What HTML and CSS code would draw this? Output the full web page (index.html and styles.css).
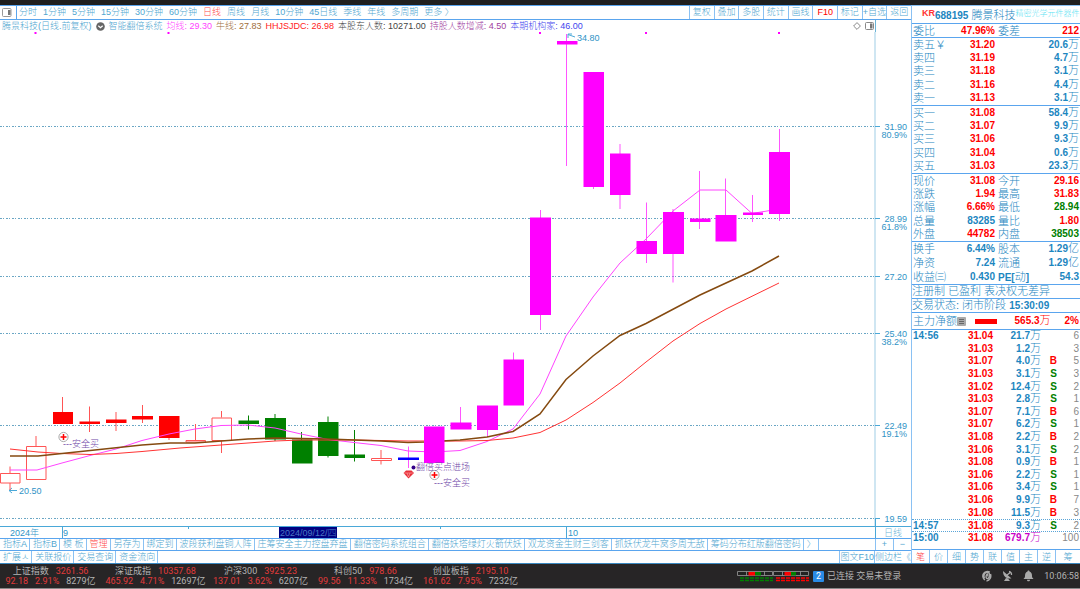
FILE: index.html
```html
<!DOCTYPE html>
<html lang="zh-CN">
<head>
<meta charset="utf-8">
<title>腾景科技 688195</title>
<link rel="stylesheet" href="styles.css">
</head>
<body>
<div class="titlebar"></div>
<div class="workspace">
<main class="left">
  <nav class="toolbar">
    <button class="pane-toggle" aria-label="侧栏"><svg width="10" height="9" viewBox="0 0 10 9"><rect x=".5" y=".5" width="8.500" height="8" rx="1" fill="#fff" stroke="#999"/><rect x="6" y="2" width="2.500" height="5" fill="#777"/></svg></button>
    <div class="periods">
      <button>分时</button><button>1分钟</button><button>5分钟</button><button>15分钟</button><button>30分钟</button><button>60分钟</button><button class="on">日线</button><button>周线</button><button>月线</button><button>10分钟</button><button>45日线</button><button>季线</button><button>年线</button><button>多周期</button><button>更多 〉</button>
    </div>
    <div class="actions">
      <button>复权</button><button>叠加</button><button>多股</button><button>统计</button><button>画线</button><button class="f10">F10</button><button>标记</button><button>+自选</button><button>返回</button>
    </div>
  </nav>
  <div class="indicators">
    <span>腾景科技(日线.前复权)</span>
    <svg width="9" height="9" viewBox="0 0 9 9"><circle cx="4.500" cy="4.500" r="4.300" fill="#666"/><path d="M2.300 3.700 4.500 5.700 6.700 3.700" fill="none" stroke="#fff" stroke-width="1.200"/></svg>
    <span>智能翻倍系统</span>
    <span class="magenta">均线: 29.30</span>
    <span class="brown">牛线: 27.83</span>
    <span class="red">HHJSJDC: 26.98</span>
    <span class="dark">本股东人数: 10271.00</span>
    <span class="purple">持股人数增减: 4.50</span>
    <span class="blue">本期机构家: 46.00</span>
    <div class="corner">
      <svg width="8" height="8" viewBox="0 0 8 8"><path d="M4 .6 7.400 4 4 7.400 .6 4Z" fill="none" stroke="#888"/></svg>
      <svg width="9" height="8" viewBox="0 0 9 8"><rect x=".5" y=".5" width="8" height="7" rx="1" fill="none" stroke="#888"/><rect x="5" y="1.500" width="2.500" height="5" fill="#777"/></svg>
    </div>
  </div>
  <svg class="chart" viewBox="0 32 911 506" role="img" aria-label="日线图">
    <g class="grid">
      <path d="M0 126.500H875M0 218.500H875M0 276.500H875M0 333.500H875M0 425.500H875M0 518.500H875"/>
    </g>
    <path class="axis-soft" d="M875 32V526"/>
    <path class="axis" d="M875 126.500h5M875 218.500h5M875 276.500h5M875 333.500h5M875 425.500h5M875 518.500h5M875.500 519V538M0 526.500H911M62.500 527V538M566.500 527V538M188.500 527v2M440.500 527v2"/>
    <g class="price" text-anchor="end">
      <text x="907" y="130">31.90</text><text x="907" y="138">80.9%</text>
      <text x="907" y="222">28.99</text><text x="907" y="230">61.8%</text>
      <text x="907" y="280">27.20</text>
      <text x="907" y="337">25.40</text><text x="907" y="345">38.2%</text>
      <text x="907" y="429">22.49</text><text x="907" y="437">19.1%</text>
      <text x="907" y="522">19.59</text>
    </g>
    <rect x="279" y="527" width="58" height="11" fill="#000080"/>
    <g class="price">
      <text x="10" y="536">2024年</text><text x="63" y="536">9</text><text x="280" y="536" class="hl">2024/09/12/四</text><text x="568" y="536">10</text><text x="884" y="536" class="pale">日线</text>
      <text x="19" y="494">20.50</text><text x="577" y="41">34.80</text>
    </g>
    <path class="axis" d="M9 490.500h8M12 488 9 490.500 12 493M568 34.500 575 37M568 38v-4h4"/>

    <g class="m-wick">
      <path d="M408.500 446.500V468M460.500 407v16M487.500 430v7M513.500 352.500v8M540.500 210v120M566.500 34v132M593.500 187v2M620 144v65M646.500 202.500V263M673 209v73.500M699.500 171v58M725.500 178.500V216M752.500 195v27M779.500 129v92"/>
    </g>
    <g class="r-wick">
      <path d="M10 466.500V473M10 483v7M36 436v10.500M62.500 397v27M89.500 406.500V432M116 412v19M142.500 405v18M169 438v2M195.500 424v16M221.500 411v6.500M221.500 440.500V453M381 450v14.500"/>
      <path d="M.5 473.500h19.500v9.500H.5ZM26.500 446.500h19.500v33H26.500ZM186 440.500h19.500v1.500H186ZM212 418h19.500v22.500H212ZM371.500 458.500h20v2h-20Z"/>
    </g>
    <path class="g-wick" d="M248.500 415.500v14M275 414v27M301.500 432v8M328 416.500V457.500M354.500 430v31.500"/>
    <path fill="#f00" d="M53 412h20v12H53ZM79.500 421.500H100v2.500H79.500ZM106 419.500h20.500v3.500H106ZM132 416h21v3.500h-21ZM159 416h20.500v22H159Z"/>
    <path fill="#008000" d="M238.500 420.500H259v3.500h-20.500ZM265 418h21v21.500h-21ZM292 439.500h20.500v24H292ZM318 422h20.500v34H318ZM344.500 454.500H365v3.500h-20.500Z"/>
    <path class="m-line" d="M10 470H37L62 463 90 455.500 116 449 142 440.500 169 434 195 429 221 425.500 248 425 275 428 301 434 328 439.500 354 442.500 381 445.500 408 451 434 452 460 450.500 487 441.500 513 429 540 394 566 336 593 297 620 263 646 239 673 211 700 190H726L752 213.500 779 209"/>
    <path class="r-line" d="M10 449 38 452 62 453.500 90 454.500 116 453.500 142 451.500 180 448 221 445 275 441 301 440H354L408 441H460L487 440.500 513 438 540 432.500 566 420 593 402.500 620 383 646 362 673 341 700 323.500 726 309 779 283"/>
    <path class="b-line" d="M10 456H38L62 453.500 142 445 170 443H195L248 439 275 438 328 439 381 441 408 442.500 424 442 460 440 487 437 513 431.500 540 414 566 379.500 593 356 620 335.500 646 323.500 700 295 752 271 779 256"/>
    <path fill="#00f" d="M398 457.500h21v2.500h-21Z"/>
    <path fill="#f0f" d="M424 426.500h20.500v36.500H424ZM450.500 422.500h21v7h-21ZM477 405.500h21V430h-21ZM503.500 359.500H524v46h-20.500ZM530 217.500h21V315h-21ZM557 41h20.500v3.500H557ZM583.500 72H604v115h-20.500ZM610 153.500h20.500V195H610ZM636.500 241H657v13h-20.500ZM663 212h21v42h-21ZM690 218.500h20.500v3.500H690ZM715.500 215h21v26.500h-21ZM743 212.500h20v2.500h-20ZM769 152h21v62h-21Z"/>
    <path fill="#f0f" d="M34.500 32h2v2h-2ZM167.500 32h2v2h-2ZM539 32h2v2h-2ZM645 32h2v2h-2ZM778 32h2v2h-2Z"/>
    <g class="signal">
      <circle cx="63.500" cy="437" r="4.600"/><path d="M60.500 437h6M63.500 434v6"/>
      <circle cx="434.500" cy="475" r="4.600"/><path d="M431.500 475h6M434.500 472v6"/>
    </g>
    <path d="M406 470.500h5.500L414 473l-5.500 5.500L403.500 473Z" fill="#e8303a"/><path d="M404 473h9M407 473l1.500 4 1.500-4" fill="none" stroke="#ffb0b0" stroke-width=".6"/>
    <circle cx="413.500" cy="467.500" r="2" fill="#308"/>
    <g class="note"><text x="63" y="447">---安全买</text><text x="416" y="470">翻倍买点进场</text><text x="434" y="486">---安全买</text></g>
  </svg>
  <nav class="tabs">
    <button>指标A</button><button>指标B</button><button>模 板</button><button class="on">管理</button><button>另存为</button><button>绑定到</button><button>波段获利盘铜人阵</button><button>庄筹安全主力控盘弃盘</button><button>翻倍密码系统组合</button><button>翻倍妖塔绿灯火箭伏妖</button><button>双龙资金生财三剑客</button><button>抓妖伏龙牛窝多周无敌</button><button>筹码分布红版翻倍密码</button><button>〉</button>
    <div class="zoom"><button>+</button><button>−</button></div>
  </nav>
  <nav class="tabs second">
    <button>扩展ㅅ</button><button>关联报价</button><button>交易查询</button><button>资金流向</button>
    <div class="side"><button>图文F10</button><button>侧边栏</button><button class="more">《</button></div>
  </nav>
</main>

<aside class="quote">
  <h1><sup>KR</sup><b>688195</b> 腾景科技<small>精密光学元件器件</small></h1>
  <table class="pair one"><tbody>
    <tr><th>委比</th><td class="up">47.96%</td><th>委差</th><td class="up">212</td></tr>
  </tbody></table>
  <table class="book"><tbody>
    <tr><th>卖五￥</th><td class="up">31.20</td><td>20.6<i>万</i></td></tr>
    <tr><th>卖四</th><td class="up">31.19</td><td>4.7<i>万</i></td></tr>
    <tr><th>卖三</th><td class="up">31.18</td><td>3.1<i>万</i></td></tr>
    <tr><th>卖二</th><td class="up">31.16</td><td>4.4<i>万</i></td></tr>
    <tr><th>卖一</th><td class="up">31.13</td><td>3.1<i>万</i></td></tr>
  </tbody></table>
  <table class="book"><tbody>
    <tr><th>买一</th><td class="up">31.08</td><td>58.4<i>万</i></td></tr>
    <tr><th>买二</th><td class="up">31.07</td><td>9.9<i>万</i></td></tr>
    <tr><th>买三</th><td class="up">31.06</td><td>9.3<i>万</i></td></tr>
    <tr><th>买四</th><td class="up">31.04</td><td>0.6<i>万</i></td></tr>
    <tr><th>买五</th><td class="up">31.03</td><td>23.3<i>万</i></td></tr>
  </tbody></table>
  <table class="pair five"><tbody>
    <tr><th>现价</th><td class="up">31.08</td><th>今开</th><td class="up">29.16</td></tr>
    <tr><th>涨跌</th><td class="up">1.94</td><th>最高</th><td class="up">31.83</td></tr>
    <tr><th>涨幅</th><td class="up">6.66%</td><th>最低</th><td class="down">28.94</td></tr>
    <tr><th>总量</th><td>83285</td><th>量比</th><td class="up">1.80</td></tr>
    <tr><th>外盘</th><td class="up">44782</td><th>内盘</th><td class="down">38503</td></tr>
  </tbody></table>
  <table class="pair three"><tbody>
    <tr><th>换手</th><td>6.44%</td><th>股本</th><td>1.29<i>亿</i></td></tr>
    <tr><th>净资</th><td>7.24</td><th>流通</th><td>1.29<i>亿</i></td></tr>
    <tr><th>收益㈢</th><td>0.430</td><th><b>PE[</b>动<b>]</b></th><td>54.3</td></tr>
  </tbody></table>
  <p>注册制 已盈利 表决权无差异</p>
  <p>交易状态: 闭市阶段 <b>15:30:09</b></p>
  <div class="flow"><span>主力净额</span><svg width="9" height="9" viewBox="0 0 9 9"><rect width="9" height="9" rx="1" fill="#aaa"/><path d="M2 2.500h5M2 4.500h5M2 6.500h5" stroke="#555" stroke-width=".8"/></svg><span class="bar"></span><b>565.3<i>万</i></b><b class="pct">2%</b></div>
  <table class="ticks"><tbody>
    <tr><th>14:56</th><td class="up">31.04</td><td>21.7<i>万</i></td><td></td><td>6</td></tr>
    <tr><th></th><td class="up">31.03</td><td>1.2<i>万</i></td><td></td><td>3</td></tr>
    <tr><th></th><td class="up">31.07</td><td>4.0<i>万</i></td><td class="up">B</td><td>5</td></tr>
    <tr><th></th><td class="up">31.03</td><td>3.1<i>万</i></td><td class="down">S</td><td>3</td></tr>
    <tr><th></th><td class="up">31.02</td><td>12.4<i>万</i></td><td class="down">S</td><td>2</td></tr>
    <tr><th></th><td class="up">31.03</td><td>2.8<i>万</i></td><td class="down">S</td><td>1</td></tr>
    <tr><th></th><td class="up">31.07</td><td>7.1<i>万</i></td><td class="up">B</td><td>6</td></tr>
    <tr><th></th><td class="up">31.07</td><td>6.2<i>万</i></td><td class="down">S</td><td>1</td></tr>
    <tr><th></th><td class="up">31.08</td><td>2.2<i>万</i></td><td class="up">B</td><td>2</td></tr>
    <tr><th></th><td class="up">31.06</td><td>3.1<i>万</i></td><td class="down">S</td><td>2</td></tr>
    <tr><th></th><td class="up">31.08</td><td>0.9<i>万</i></td><td class="up">B</td><td>1</td></tr>
    <tr><th></th><td class="up">31.06</td><td>2.2<i>万</i></td><td class="down">S</td><td>1</td></tr>
    <tr><th></th><td class="up">31.06</td><td>3.4<i>万</i></td><td class="down">S</td><td>1</td></tr>
    <tr><th></th><td class="up">31.06</td><td>9.9<i>万</i></td><td class="up">B</td><td>7</td></tr>
    <tr><th></th><td class="up">31.08</td><td>11.5<i>万</i></td><td class="up">B</td><td>3</td></tr>
    <tr class="split"><th>14:57</th><td class="up">31.08</td><td>9.3<i>万</i></td><td class="down">S</td><td>2</td></tr>
    <tr class="split"><th>15:00</th><td class="up">31.08</td><td class="big">679.7<i>万</i></td><td></td><td>100</td></tr>
  </tbody></table>
  <nav class="views"><button class="on">笔</button><button>价</button><button>细</button><button>势</button><button>联</button><button>值</button><button>主</button><button>逆</button><button>筹</button></nav>
</aside>
</div>

<footer class="status">
  <div class="indices">
    <div><p><span>上证指数</span><em>3261.56</em></p><p><em>92.18</em><em>2.91%</em><span>8279亿</span></p></div>
    <div><p><span>深证成指</span><em>10357.68</em></p><p><em>465.92</em><em>4.71%</em><span>12697亿</span></p></div>
    <div><p><span>沪深300</span><em>3925.23</em></p><p><em>137.01</em><em>3.62%</em><span>6207亿</span></p></div>
    <div><p><span>科创50</span><em>978.66</em></p><p><em>99.56</em><em>11.33%</em><span>1734亿</span></p></div>
    <div><p><span>创业板指</span><em>2195.10</em></p><p><em>161.62</em><em>7.95%</em><span>7232亿</span></p></div>
  </div>
  <div class="link">
    <svg width="73" height="11" viewBox="0 0 73 11">
      <path d="M.5 .5h35v4H.5ZM36.500 .5h35v4h-35Z" fill="#222" stroke="#999" stroke-width=".8"/>
      <path d="M9.500 .5v4M27.500 .5v4M45.500 .5v4M63.500 .5v4" stroke="#999" stroke-width=".8"/>
      <path d="M11.500 1H18v3.500h-6.500ZM47.500 1H54v3.500h-6.500Z" fill="#f00"/><path d="M18 1h6v3.500h-6ZM54 1h5v3.500h-5Z" fill="#008000"/>
      <path d="M3 7h33M3 9.500h33" stroke="#008000" stroke-width="1.500" stroke-dasharray="4 1"/><path d="M39 7h33M39 9.500h33" stroke="#f00" stroke-width="1.500" stroke-dasharray="4 1"/>
    </svg>
    <b class="count">2</b><span>已连接 交易未登录</span>
  </div>
  <div class="tray">
    <button aria-label="客服"><svg width="11" height="12" viewBox="0 0 11 12"><path d="M8.800 2.200A4.500 4.500 0 1 0 4 10M3.500 8.500C2 5 4 2 6.500 2.300S9.500 6 7.500 8 4.500 7 5.500 5 7 4.500 6.800 6.500M9.500 4c1 3-.5 6.500-4 7" fill="none" stroke="#aaa" stroke-width="1.400"/></svg></button>
    <button aria-label="卫星"><svg width="11" height="12" viewBox="0 0 11 12"><path d="M1 1c0 5 3 8 8.500 7.500ZM4 8 2 11h6L6 8.500Z" fill="#aaa"/><path d="M5 5 9 2M7 1.500a3 3 0 0 1 2.500 3.500" fill="none" stroke="#aaa" stroke-width="1.300"/></svg></button>
    <button aria-label="提醒"><svg width="11" height="12" viewBox="0 0 11 12"><path d="M5.500 .5c.7 0 1 .5 1 1C8.500 2.200 9 4 9 6c0 1.500.7 2 1.500 3H.5C1.300 8 2 7.500 2 6c0-2 .5-3.800 2.500-4.500 0-.5.3-1 1-1ZM4 9.800h3c0 1-.6 1.500-1.500 1.500S4 10.800 4 9.800Z" fill="#aaa"/></svg></button>
    <time>10:06:58</time>
  </div>
</footer>
</body>
</html>
```

FILE: styles.css
```css
* { box-sizing: border-box; }
body {
  margin: 0;
  min-height: 100vh;
  display: flex;
  flex-direction: column;
  background: #fff;
  color: #4fa6d0;
  font: 300 9px/12px "Liberation Sans", "Noto Sans CJK SC", sans-serif;
}
button {
  margin: 0;
  padding: 0;
  border: 0;
  background: none;
  color: inherit;
  font: inherit;
  white-space: nowrap;
}
svg { display: block; }
h1, p { margin: 0; }
i, em { font-style: normal; }

.titlebar { height: 5px; background: #1f1f1f; }
.workspace { display: grid; grid-template-columns: minmax(0, 1fr) 169px; }
.left { min-width: 0; }

.toolbar {
  display: flex;
  height: 15px;
  border-top: 1px solid #5aa5ee;
  border-bottom: 1px solid #5aa5ee;
  line-height: 13px;
}
.pane-toggle { padding: 0 4px 0 2px; border-right: 1px solid #5aa5ee; }
.periods { display: flex; gap: 6px; padding-left: 2px; }
.actions {
  margin-left: auto;
  width: 222px;
  display: grid;
  grid-template-columns: repeat(9, 1fr);
}
.actions button { border-left: 1px solid #8ac1f3; display: flex; justify-content: center; }
.on { color: #ff4a4a; }
.f10 { color: #f00; }

.indicators {
  display: flex;
  align-items: center;
  gap: 4px;
  height: 12px;
  padding-left: 2px;
  white-space: nowrap;
}
.magenta { color: #f4f; }
.brown { color: #a06e3c; }
.red { color: #f22; }
.dark { color: #444; }
.purple { color: #a040a0; }
.blue { color: #44e; }
.corner {
  margin-left: auto;
  margin-right: 35px;
  padding-right: 1px;
  display: flex;
  align-items: center;
  gap: 4px;
  height: 12px;
  border-right: 1px solid #6cb4d6;
}

.chart { width: 100%; height: auto; }
.grid path { fill: none; stroke: #6aa6c4; stroke-dasharray: 2 1 1 2; }
.axis-soft { stroke: #cfe6f2; stroke-width: 2; }
.axis { fill: none; stroke: #4aa8d8; }
.price { fill: #2f93c6; }
.pale { fill: #6cb4d6; }
.hl { fill: #4a78c0; }
.note { fill: #7048a8; }
.m-wick { stroke: #f5f; fill: none; }
.r-wick { stroke: #f55; fill: #fff; }
.g-wick { stroke: #008000; fill: none; }
.m-line { stroke: #f4f; fill: none; }
.r-line { stroke: #f33; fill: none; }
.b-line { stroke: #854a10; stroke-width: 1.5; fill: none; }
.signal circle { fill: #fff; stroke: #aaa; }
.signal path { stroke: #f00; stroke-width: 1.5; }

.tabs {
  display: flex;
  height: 12px;
  border-top: 1px solid #5aa5ee;
  line-height: 11px;
}
.tabs > button { padding: 0 2px 0 3px; border-right: 1px solid #8ac1f3; }
.tabs.second { height: 13px; line-height: 12px; }
.zoom {
  margin-left: auto;
  width: 36px;
  display: grid;
  grid-template-columns: 1fr 1fr;
}
.zoom button { border-left: 1px solid #8ac1f3; }
.side { margin-left: auto; display: flex; }
.side button { border-left: 1px solid #8ac1f3; }
.side .more { border: 0; }

.quote {
  display: flex;
  flex-direction: column;
  border-left: 1px solid #8ac1f3;
  color: #1c86bf;
  font-size: 11px;
  line-height: 12px;
}
.quote h1 {
  height: 19px;
  padding: 1px 0 0 10px;
  font-size: 11px;
  font-weight: 300;
  line-height: 17px;
  white-space: nowrap;
  border-top: 1px solid #8ac1f3;
  border-bottom: 1px solid #5aa5ee;
}
.quote b { font-size: 10px; font-weight: 700; }
.quote sup { color: #f33; font-size: 9px; font-weight: 700; line-height: 8px; vertical-align: 3px; }
.quote small { color: #5fe3f3; font-size: 8px; line-height: 8px; vertical-align: 3px; }
.quote table, .quote tbody { display: grid; }
.quote table { border-bottom: 1px solid #5aa5ee; }
.quote tbody { grid-auto-rows: 1fr; }
.quote tr { display: grid; align-items: center; padding: 0 1px; }
.quote th { padding: 0; text-align: left; font-weight: 300; white-space: nowrap; }
.quote td { padding: 0; text-align: right; font-size: 10px; font-weight: 700; white-space: nowrap; }
.quote i { font-size: 11px; font-weight: 300; line-height: 1px; }
.quote .up { color: #f00; }
.quote .down { color: #008000; }
.pair tr { grid-template-columns: 36px 46px 30px 1fr; }
.pair th:nth-child(3) { padding-left: 3px; }
.book tr { grid-template-columns: 36px 46px 1fr; }
.one { height: 14px; }
.book, .five { height: 68px; }
.three { height: 43px; }
.quote p { height: 14px; line-height: 13px; white-space: nowrap; border-bottom: 1px solid #5aa5ee; }
.flow {
  display: flex;
  align-items: center;
  height: 17px;
  padding: 0 1px;
  border-bottom: 1px solid #5aa5ee;
}
.flow b { color: #f00; margin-left: auto; }
.flow .pct { margin-left: 14px; }
.bar { width: 22px; height: 5px; margin-left: 9px; background: #f00; }
.quote .ticks { flex: 1; padding-bottom: 5px; line-height: 10px; }
.ticks tr { grid-template-columns: 34px 46px 48px 16px 1fr; }
.quote .ticks th { font-size: 10px; font-weight: 700; }
.quote .ticks td:last-child { color: #888; font-weight: 400; }
.quote .ticks .big { color: #c800c8; }
.ticks .split { border-top: 1px dotted #5aa5d8; }
.views {
  height: 13px;
  display: grid;
  grid-template-columns: repeat(8, 18px) 1fr;
  color: #4fa6d0;
  font-size: 9px;
}
.views button { border-right: 1px solid #8ac1f3; }
.views button:last-child { border: 0; }

.status {
  flex: 1;
  display: flex;
  align-items: center;
  min-height: 26px;
  padding-right: 1px;
  border-top: 1px solid #3a88c0;
  border-bottom: 1px solid #888;
  background: #272526;
  color: #b4b4b4;
  font-family: Roboto, "Noto Sans CJK SC", sans-serif;
  font-weight: 400;
  line-height: 10px;
  white-space: nowrap;
}
.status em { color: #e23a3a; }
.indices { display: flex; }
.indices > div { width: 105px; padding-right: 4px; }
.indices p { display: flex; justify-content: center; gap: 7px; }
.link { display: flex; align-items: center; gap: 3px; margin-left: auto; }
.count {
  width: 11px;
  background: #2a8be6;
  color: #fff;
  border-radius: 1px;
  text-align: center;
  font-weight: 400;
  line-height: 11px;
}
.tray { display: flex; align-items: center; gap: 10px; margin-left: 80px; }
.tray time { font-size: 9px; }
```
